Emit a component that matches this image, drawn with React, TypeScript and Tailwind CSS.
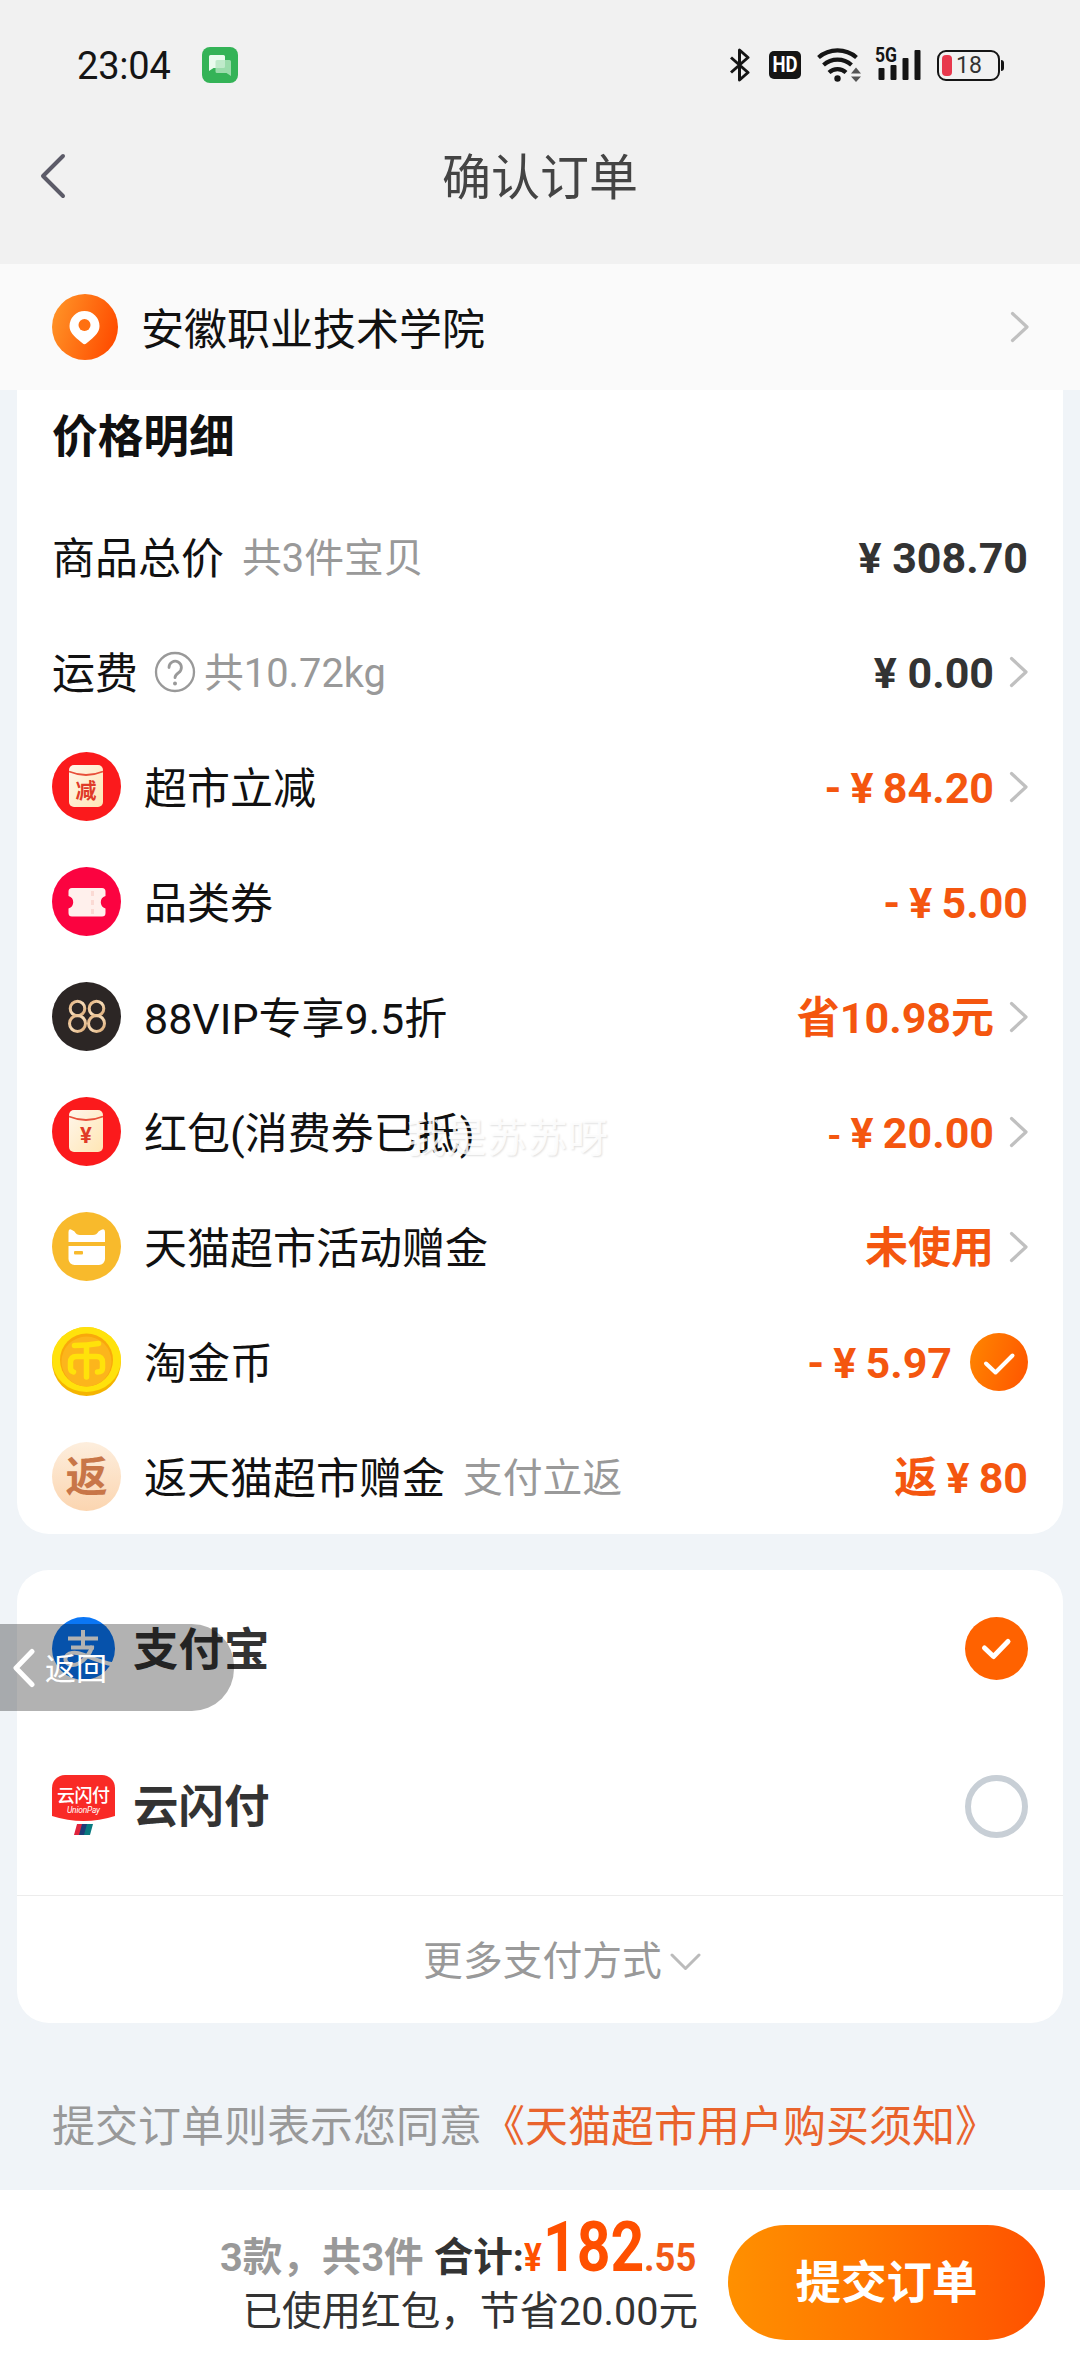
import type { ReactNode } from 'react';
import clsx from 'clsx';

interface PriceRow {
    id: number;
    title: string;
    hint?: string;
    help?: boolean;
    icon?: ReactNode;
    value: ReactNode;
    dark?: boolean;
    tail?: 'arrow' | 'check';
}

function ArrowRight() {
    return (
        <svg className="h-8 w-[19px] shrink-0" viewBox="0 0 19 32" fill="none">
            <path d="M2.500 2.500 17 16 2.500 29.500" stroke="#c0c0c0" strokeWidth="3.2" strokeLinecap="round" strokeLinejoin="round" />
        </svg>
    );
}

function CircleCheck() {
    return (
        <svg className="size-[58px] shrink-0" viewBox="0 0 58 58" fill="none">
            <defs>
                <linearGradient id="check" x1="0" y1="0.2" x2="1" y2="0.5">
                    <stop stopColor="#ff8400" />
                    <stop offset="1" stopColor="#ff5a00" />
                </linearGradient>
            </defs>
            <circle cx="29" cy="29" r="29" fill="url(#check)" />
            <path d="M16 30.5 25.5 39.5 42.5 22.5" stroke="#fff" strokeWidth="4" strokeLinecap="round" strokeLinejoin="round" />
        </svg>
    );
}

// 红色信封图标，中间放一个字
function EnvelopeIcon({ label }: { label: string }) {
    return (
        <svg className="size-[69px] shrink-0" viewBox="0 0 69 69">
            <defs>
                <linearGradient id="paper" x1="0" y1="0" x2="1" y2="1">
                    <stop stopColor="#fff6ea" />
                    <stop offset="1" stopColor="#ffe6b4" />
                </linearGradient>
            </defs>
            <circle cx="34.5" cy="34.5" r="34.5" fill="#fb1a1c" />
            <rect x="17" y="13" width="34" height="42" rx="5" fill="url(#paper)" />
            <path d="M17 19.500q17 7 34 0" stroke="#e8503a" strokeWidth="1.800" fill="none" />
            <text x="34" y="45.500" textAnchor="middle" fontSize={label === '¥' ? 22 : 21} fontWeight="700" fill="#e03a28">
                {label}
            </text>
        </svg>
    );
}

function CouponIcon() {
    return (
        <svg className="size-[69px] shrink-0" viewBox="0 0 69 69">
            <circle cx="34.5" cy="34.5" r="34.5" fill="#fb0340" />
            <path d="M20 21h30a3.500 3.500 0 0 1 3.500 3.500V29a6.500 6.500 0 0 0 0 12.500v4.500a3.500 3.500 0 0 1-3.500 3.500H20a3.500 3.500 0 0 1-3.500-3.500v-4.500a6.500 6.500 0 0 0 0-12.500v-4.500A3.500 3.500 0 0 1 20 21z" fill="#fff0ec" />
            <path d="M40.500 24v23" stroke="#fbdad4" strokeWidth="3" strokeDasharray="5 4" />
        </svg>
    );
}

function Vip88Icon() {
    return (
        <svg className="size-[69px] shrink-0" viewBox="0 0 69 69" fill="none">
            <defs>
                <linearGradient id="gold" x1="0" y1="0" x2="1" y2="1">
                    <stop stopColor="#e2b07c" />
                    <stop offset="0.5" stopColor="#f7dcb8" />
                    <stop offset="1" stopColor="#d9a670" />
                </linearGradient>
            </defs>
            <circle cx="34.5" cy="34.5" r="34.5" fill="#2c2625" />
            <g stroke="url(#gold)" strokeWidth="3">
                <circle cx="25.500" cy="26.500" r="7.300" />
                <circle cx="44.500" cy="26.500" r="7.300" />
                <circle cx="25.500" cy="41.500" r="8" />
                <circle cx="44.500" cy="41.500" r="8" />
            </g>
        </svg>
    );
}

function CatCardIcon() {
    return (
        <svg className="size-[69px] shrink-0" viewBox="0 0 69 69">
            <circle cx="34.5" cy="34.5" r="34.5" fill="#f8ba2c" />
            <path d="M16.500 30V20q0-4 3.500-2l2.500 1.500q2 3.500 5.500 3.500h13q3.500 0 5.500-3.500L49 18q4-2 4 2v10z" fill="#fff" />
            <path d="M16.500 34H53v13a6 6 0 0 1-6 6H22.500a6 6 0 0 1-6-6z" fill="#fff" />
            <rect x="22" y="39" width="9" height="3.500" rx="1" fill="#f8ba2c" />
        </svg>
    );
}

function CoinIcon() {
    return (
        <svg className="size-[69px] shrink-0" viewBox="0 0 69 69" fill="none">
            <circle cx="34.5" cy="34.5" r="34.5" fill="#f5b400" />
            <ellipse cx="34.5" cy="32.500" rx="34.5" ry="32.500" fill="#ffe20c" />
            <circle cx="34.5" cy="33" r="26.500" fill="#f9a80c" />
            <circle cx="34.5" cy="34.500" r="25" fill="#fcb51c" />
            <g stroke="#ffe20a" strokeWidth="5.500" strokeLinecap="round" strokeLinejoin="round">
                <path d="M22.500 18.500q13 0 24-2" />
                <path d="M34.500 19v31" />
                <path d="M21.500 45q-3-1-3-4v-5.500q0-6 6-6h20q6 0 6 6V41q0 4-5 4" />
            </g>
        </svg>
    );
}

function ReturnIcon() {
    return (
        <div className="flex size-[69px] shrink-0 items-center justify-center rounded-full bg-linear-to-b from-[#fdeedd] to-[#fbd5b0] pt-0.5 text-[42px] leading-none font-bold text-[#c87648]">
            返
        </div>
    );
}

const rows: PriceRow[] = [
    { id: 1, title: '商品总价', hint: '共3件宝贝', value: '¥ 308.70', dark: true },
    { id: 2, title: '运费', hint: '共10.72kg', help: true, value: '¥ 0.00', dark: true, tail: 'arrow' },
    { id: 3, title: '超市立减', icon: <EnvelopeIcon label="减" />, value: '- ¥ 84.20', tail: 'arrow' },
    { id: 4, title: '品类券', icon: <CouponIcon />, value: '- ¥ 5.00' },
    { id: 5, title: '88VIP专享9.5折', icon: <Vip88Icon />, value: '省10.98元', tail: 'arrow' },
    {
        id: 6,
        title: '红包(消费券已抵)',
        icon: <EnvelopeIcon label="¥" />,
        value: <><span className="text-[36px]">-</span> ¥ 20.00</>,
        tail: 'arrow',
    },
    { id: 7, title: '天猫超市活动赠金', icon: <CatCardIcon />, value: '未使用', tail: 'arrow' },
    { id: 8, title: '淘金币', icon: <CoinIcon />, value: '- ¥ 5.97', tail: 'check' },
    { id: 9, title: '返天猫超市赠金', hint: '支付立返', icon: <ReturnIcon />, value: '返 ¥ 80' },
];

function StatusBar() {
    return (
        <div className="flex h-[130px] items-center justify-between pr-[76px] pl-[77px] text-[#151515]">
            <div className="flex items-center gap-[31px]">
                <span className="pt-0.5 text-[38px] leading-none tracking-[-0.2px]">23:04</span>
                <svg className="size-9" viewBox="0 0 36 36">
                    <rect width="36" height="36" rx="8" fill="#34b357" />
                    <path d="M8.500 8h13a1.500 1.500 0 0 1 1.500 1.500v10a1.500 1.500 0 0 1-1.500 1.500H11.500L7 24V9.500A1.500 1.500 0 0 1 8.500 8z" fill="#eafbee" />
                    <path d="M15 13h12.500a1.500 1.500 0 0 1 1.500 1.500V29l-4.500-3H15a1.500 1.500 0 0 1-1.500-1.500v-10A1.500 1.500 0 0 1 15 13z" fill="#b4e6c0" fillOpacity="0.8" />
                </svg>
            </div>
            <div className="flex items-center">
                <svg className="h-[34px] w-[22px]" viewBox="0 0 22 34" fill="none">
                    <path d="M2 9.500 19 24.500 10.500 32V2L19 9.500 2 24.500" stroke="#151515" strokeWidth="3" strokeLinejoin="round" />
                </svg>
                <div className="ml-[18px] flex h-7 w-8 items-center justify-center rounded-[5px] bg-[#151515] text-[22px] leading-none font-bold text-white">
                    <span className="scale-x-[.84]">HD</span>
                </div>
                <svg className="ml-4 h-9 w-[45px]" viewBox="0 0 45 36" fill="none" stroke="#151515" strokeWidth="4.200">
                    <path d="M1.500 10.500a29 29 0 0 1 38 0" />
                    <path d="M6.500 18a21 21 0 0 1 28 0" />
                    <path d="M12 25.500a12.500 12.500 0 0 1 17 0" />
                    <circle cx="20.500" cy="31.500" r="3.200" fill="#151515" stroke="none" />
                    <path d="M39 20.500l5 6H34zM39 35l5-5.500H34z" fill="#555" stroke="none" />
                </svg>
                <svg className="ml-[13px] h-11 w-[47px]" viewBox="0 0 47 44" fill="#151515">
                    <text x="0" y="19" fontSize="20" fontWeight="700" textLength="22" lengthAdjust="spacingAndGlyphs">5G</text>
                    <rect x="3.500" y="25" width="6" height="12" rx="1" />
                    <rect x="15.500" y="22" width="6" height="15" rx="1" />
                    <rect x="27.500" y="15" width="6" height="22" rx="1" />
                    <rect x="39.500" y="7" width="6" height="30" rx="1" />
                </svg>
                <div className="ml-[15px] flex h-[31px] w-[63px] items-center rounded-[9px] border-[2.500px] border-[#151515] pl-[3px]">
                    <span className="h-[21px] w-2.5 rounded-[4px] bg-[#e8384d]" />
                    <span className="ml-1 text-[23px] leading-none text-[#333]">18</span>
                </div>
                <span className="ml-px h-[11px] w-[3px] rounded-r-sm bg-[#151515]" />
            </div>
        </div>
    );
}

function PriceLine({ row }: { row: PriceRow }) {
    return (
        <div className="flex h-[115px] items-center pr-[35px] pl-[35px]">
            {row.icon && <div className="mr-[23px]">{row.icon}</div>}
            <span className="pt-[5px] text-[43px] text-[#111]">{row.title}</span>
            {row.help && (
                <svg className="ml-4 size-[42px]" viewBox="0 0 42 42" fill="none">
                    <circle cx="21" cy="21" r="19" stroke="#999" strokeWidth="2.300" />
                    <path d="M15 16.500a6.200 6.200 0 1 1 9.500 5.200q-3.500 2.300-3.500 5" stroke="#999" strokeWidth="2.800" strokeLinecap="round" />
                    <circle cx="21" cy="32.500" r="2" fill="#999" />
                </svg>
            )}
            {row.hint && (
                <span className={clsx('pt-[5px] text-[39.800px] text-[#999]', row.help ? 'ml-2' : 'ml-[18px]')}>{row.hint}</span>
            )}
            <div className="ml-auto flex items-center">
                <span
                    className={clsx(
                        'pt-[3px] text-[43px] font-bold',
                        row.dark ? 'text-[#333]' : 'text-[#f4560f] [word-spacing:-1.500px]'
                    )}
                >
                    {row.value}
                </span>
                {row.tail === 'arrow' && <div className="ml-[15px]"><ArrowRight /></div>}
                {row.tail === 'check' && <div className="ml-[18px]"><CircleCheck /></div>}
            </div>
        </div>
    );
}

function AlipayIcon() {
    return (
        <svg className="size-[63px]" viewBox="0 0 63 63" fill="none">
            <circle cx="31.5" cy="31.5" r="31.5" fill="#0a76f5" />
            <g stroke="#fff" strokeWidth="4">
                <path d="M16 21.500h30M31 13v17M19 30.500h23" />
                <path d="M40.500 29q-4 12-14 17.500c-7 3.500-14 0-13-5.500 1.500-6 10-6.500 17.500-3.500 9 3.500 18 8 31 10" />
            </g>
        </svg>
    );
}

function UnionPayIcon() {
    return (
        <svg className="size-[63px]" viewBox="0 0 63 63">
            <path d="M0 13A13 13 0 0 1 13 0h37a13 13 0 0 1 13 13v28q-31.500 10-63 0z" fill="#f92a26" />
            <text x="31.500" y="27" textAnchor="middle" fontSize="18" fontWeight="500" textLength="53" fill="#fff">云闪付</text>
            <text x="31.500" y="37.500" textAnchor="middle" fontSize="8.500" fontStyle="italic" textLength="33" fill="#fff">UnionPay</text>
            <path d="M25 49h6l-3 11h-6z" fill="#e0243c" />
            <path d="M30 49h6l-3 11h-6z" fill="#1f3c78" />
            <path d="M35 49h6l-3 11h-6z" fill="#0a7a80" />
        </svg>
    );
}

export default function App() {
    return (
        <div className="relative flex h-[2376px] w-[1080px] flex-col overflow-hidden bg-[#f0f4f8] font-[Roboto,'Noto_Sans_CJK_SC',sans-serif]">
            {/* 顶部状态栏 + 标题 */}
            <header className="h-[264px] bg-[#f1f1f1]">
                <StatusBar />
                <div className="grid h-[92px] grid-cols-[1fr_auto_1fr] items-center">
                    <svg className="ml-[39px] h-[46px] w-7" viewBox="0 0 28 46" fill="none">
                        <path d="M24 3 4 23l20 20" stroke="#5c5b68" strokeWidth="4" strokeLinecap="round" strokeLinejoin="round" />
                    </svg>
                    <h1 className="pt-1 text-[49px] leading-none text-[#444]">确认订单</h1>
                </div>
            </header>

            {/* 收货地址 */}
            <div className="flex h-[126px] shrink-0 items-center bg-[#fafafa] pr-[51px] pl-[52px]">
                <svg className="size-[66px]" viewBox="0 0 66 66">
                    <defs>
                        <linearGradient id="pin" x1="0" y1="0.3" x2="1" y2="0.6">
                            <stop stopColor="#ff9226" />
                            <stop offset="1" stopColor="#ff4c00" />
                        </linearGradient>
                    </defs>
                    <circle cx="33" cy="33" r="33" fill="url(#pin)" />
                    <path d="M32.500 17a15 15 0 0 1 15 15c0 6-4.500 10-8.500 13.500l-4.500 3.800a3 3 0 0 1-4 0L26 45.500c-4-3.500-8.500-7.500-8.500-13.500a15 15 0 0 1 15-15z" fill="#fff" />
                    <circle cx="32.500" cy="31" r="6" fill="#ff7010" />
                </svg>
                <span className="ml-[23px] pt-[7px] text-[43px] text-[#111]">安徽职业技术学院</span>
                <div className="ml-auto"><ArrowRight /></div>
            </div>

            {/* 价格明细 */}
            <section className="mx-[17px] h-[1144px] shrink-0 rounded-b-[32px] bg-white">
                <div className="flex h-[109px] items-center px-[35px] pb-[14px]">
                    <h2 className="text-[45.700px] leading-none font-bold text-[#111]">价格明细</h2>
                </div>
                {rows.map((row) => (
                    <PriceLine key={row.id} row={row} />
                ))}
            </section>

            {/* 支付方式 */}
            <section className="mx-[17px] mt-9 h-[453px] shrink-0 rounded-[32px] bg-white">
                <div className="flex h-[157px] items-center px-[35px]">
                    <AlipayIcon />
                    <span className="ml-[18px] pt-[5px] text-[45.500px] font-bold text-[#333]">支付宝</span>
                    <svg className="ml-auto size-[63px]" viewBox="0 0 63 63" fill="none">
                        <circle cx="31.5" cy="31.5" r="31.5" fill="#ff6200" />
                        <path d="M19.500 31 28.500 39.500 43 24.500" stroke="#fff" strokeWidth="5" strokeLinecap="round" strokeLinejoin="round" />
                    </svg>
                </div>
                <div className="flex h-[169px] items-center border-b border-[#ececec] px-[35px] pb-[10px]">
                    <UnionPayIcon />
                    <span className="ml-[18px] pt-[5px] text-[45.500px] font-bold text-[#333]">云闪付</span>
                    <span className="ml-auto size-[63px] rounded-full border-[6px] border-[#c8cfd6]" />
                </div>
                <div className="flex h-[127px] items-center justify-center pt-1 pl-[44px]">
                    <span className="text-[39.800px] text-[#999]">更多支付方式</span>
                    <svg className="ml-2 h-[18px] w-[31px]" viewBox="0 0 31 18" fill="none">
                        <path d="M2 2 15.500 15.500 29 2" stroke="#bbb" strokeWidth="3" strokeLinecap="round" strokeLinejoin="round" />
                    </svg>
                </div>
            </section>

            <p className="mt-[72px] pl-[52px] text-[43px] leading-[64px] whitespace-nowrap text-[#999]">
                提交订单则表示您同意<span className="text-[#e9632c]">《天猫超市用户购买须知》</span>
            </p>

            {/* 底部结算栏 */}
            <footer className="mt-auto flex h-[186px] shrink-0 items-start justify-end bg-white pr-[35px]">
                <div className="mt-[22px] mr-[30px] flex flex-col items-end text-[39.600px] text-[#333]">
                    <div className="flex h-[74px] items-baseline font-bold whitespace-nowrap">
                        <span className="text-[#999]">3款，共3件</span>
                        <span className="ml-[10px]">合计:</span>
                        <span className="w-[19px] origin-left scale-x-[.84] text-[#ff5000]">¥</span>
                        <span className="w-[101px] origin-left scale-x-[.83] text-[71px] leading-[70px] text-[#ff5000]">182</span>
                        <span className="w-[54px] origin-left scale-x-[.92] text-[#f25a16]">.55</span>
                    </div>
                    <div className="leading-[52px] whitespace-nowrap">已使用红包，节省20.00元</div>
                </div>
                <button className="mt-[35px] h-[115px] w-[317px] rounded-full bg-linear-to-r from-[#ff9000] to-[#ff5000] pt-1 text-[45.500px] font-bold text-white">
                    提交订单
                </button>
            </footer>

            {/* 水印 */}
            <div className="absolute top-[1116px] left-[406px] text-[40px] leading-[46px] tracking-[0.500px] text-white/85 [text-shadow:1px_1px_2px_rgba(0,0,0,0.13)]">
                我是苏苏呀
            </div>

            {/* 悬浮返回按钮 */}
            <button className="absolute top-[1624px] left-0 flex h-[87px] w-[234px] items-center rounded-r-[42px] bg-black/30 pl-3 text-[31px] text-white">
                <svg className="h-10 w-[24px]" viewBox="0 0 24 40" fill="none">
                    <path d="M20 3.500 4 20l16 16.500" stroke="#fff" strokeWidth="5" strokeLinecap="round" strokeLinejoin="round" />
                </svg>
                <span className="ml-[9px] pt-[5px]">返回</span>
            </button>
        </div>
    );
}
